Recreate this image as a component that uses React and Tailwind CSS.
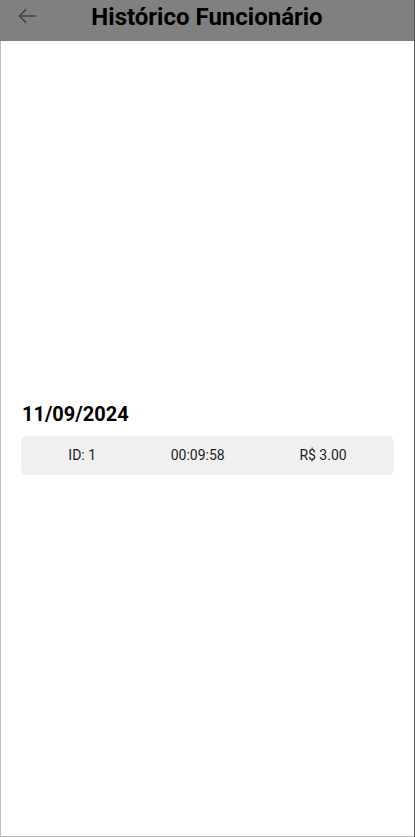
const rows = [{ id: 1, time: "00:09:58", total: "R$ 3.00" }];

export default function App() {
  return (
    <div className="w-full h-[837px] flex flex-col bg-white border-r border-r-[#555555] font-['Roboto',sans-serif]">
      <header className="relative h-[41px] shrink-0 bg-[#808080] flex justify-center">
        <button className="absolute left-[18px] top-[8px] w-[18px] h-[16px]">
          <svg width="18" height="16" viewBox="0 0 18 16" fill="none" stroke="#43434f" strokeWidth="1.6" strokeLinecap="square">
            <path d="M1.5 8H17" />
            <path d="M7.5 2L1.5 8l6 6" />
          </svg>
        </button>
        <h1 className="mt-[3px] text-[24px] leading-[28px] font-bold text-black">
          Histórico Funcionário
        </h1>
      </header>
      <main className="flex-1 flex flex-col justify-center px-5 border-l border-b border-[#bdbdbd]">
        <h2 className="text-[20px] leading-[24px] font-bold text-black ml-px mb-[10px]">11/09/2024</h2>
        {rows.map((r) => (
          <div
            key={r.id}
            className="h-[39px] flex items-center justify-around px-[10px] rounded-md bg-[#f0f0f0] text-[14px] text-[#1f1f1f]"
          >
            <span>ID: {r.id}</span>
            <span>{r.time}</span>
            <span>{r.total}</span>
          </div>
        ))}
      </main>
    </div>
  );
}
